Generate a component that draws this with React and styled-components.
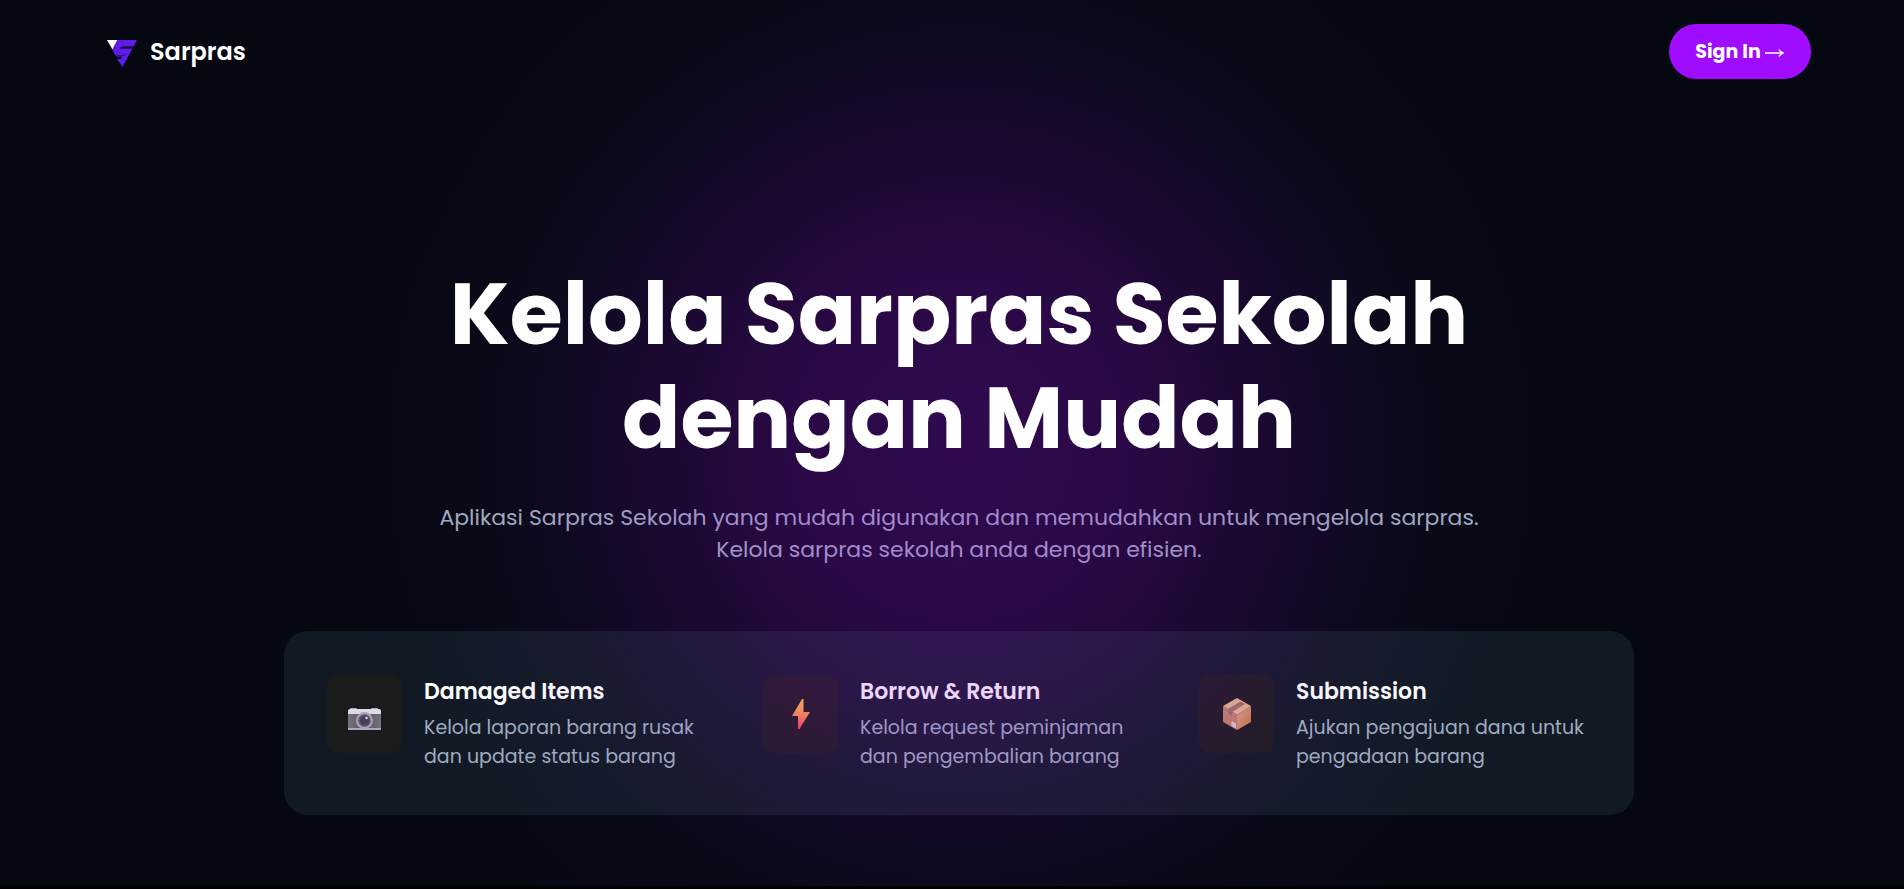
import React from "react";
import styled, { createGlobalStyle } from "styled-components";

const Global = createGlobalStyle`
  *, *::before, *::after { box-sizing: border-box; }
  body {
    margin: 0;
    background: #000;
    color: #fff;
    font-family: Poppins, Inter, "Open Sans", sans-serif;
  }
  h1, h2, p { margin: 0; }
`;

const Page = styled.div`
  position: relative;
  overflow: hidden;
  background: #050711;
  padding: 0 0 71px 14px;
`;

const Glow = styled.div`
  position: absolute;
  inset: 0 0 0 14px;
  pointer-events: none;
  background: radial-gradient(circle 620px at 50% 51%,
    rgba(172, 16, 255, 0.26) 0%,
    rgba(168, 16, 250, 0.225) 28%,
    rgba(150, 20, 230, 0.125) 54%,
    rgba(130, 60, 200, 0.055) 72%,
    rgba(110, 80, 190, 0.02) 88%,
    rgba(110, 80, 190, 0) 100%);
`;

const Nav = styled.header`
  display: flex;
  align-items: center;
  justify-content: space-between;
  padding: 24px 93px;
`;

const Brand = styled.a`
  display: flex;
  align-items: center;
  gap: 12px;
  color: #fff;
  text-decoration: none;
  font-size: 24px;
  line-height: 36px;
  font-weight: 600;
`;

const SignIn = styled.button`
  position: relative;
  z-index: 1;
  display: flex;
  align-items: center;
  justify-content: center;
  gap: 4px;
  width: 142px;
  height: 55px;
  border: 0;
  border-radius: 28px;
  background: #a00cff;
  color: #fff;
  font: inherit;
  font-size: 19px;
  font-weight: 700;
  cursor: pointer;
`;

const Hero = styled.section`
  display: flex;
  flex-direction: column;
  align-items: center;
  padding: 159px 24px 0;
  text-align: center;
`;

const Heading = styled.h1`
  position: relative;
  z-index: 1;
  font-size: 86px;
  line-height: 104px;
  font-weight: 700;
`;

const Lead = styled.p`
  margin-top: 32px;
  color: #a0aec0;
  font-size: 22px;
  line-height: 32px;
`;

const Features = styled.section`
  display: grid;
  grid-template-columns: repeat(3, minmax(0, 1fr));
  column-gap: 44px;
  width: 100%;
  max-width: 1350px;
  margin-top: 65px;
  padding: 44px 43px;
  border-radius: 24px;
  background: #111924;
  text-align: left;
`;

const Feature = styled.article`
  display: flex;
  align-items: flex-start;
  gap: 22px;
`;

const IconTile = styled.div`
  flex: none;
  display: grid;
  place-items: center;
  width: 75px;
  height: 78px;
  border-radius: 11px;
  background: #1c1b1b;
`;

const FeatureTitle = styled.h2`
  font-size: 22px;
  line-height: 34px;
  font-weight: 600;
`;

const FeatureText = styled.p`
  margin-top: 4px;
  color: #a0aec0;
  font-size: 19px;
  line-height: 29px;
  white-space: nowrap;
`;

const Logo = () => (
  <svg width="31" height="31" viewBox="0 -4 31 31" aria-hidden="true">
    <path d="M0 0h10.500L5.500 9.500z" fill="#fff" />
    <path d="M10.500 0H30L26.500 6.500H16.500q-2.500 0-3.500 2h12.500L15.500 27l-5.500-8h3q1.500 0 2-2.500H9L5.500 9.500z" fill="#5f1be8" />
    <path d="M15 7.200h11.500M9.500 15.500h6.500q2.500 0 3-2.500" stroke="#2c1274" strokeWidth=".8" fill="none" />
  </svg>
);

const Arrow = () => (
  <svg width="20" height="10" viewBox="0 0 20 10" fill="none" stroke="#fff" strokeWidth="1.300" aria-hidden="true">
    <path d="M0 6h18.500M14 2.500q1.500 3 4.500 3.500q-3 .5-4.500 3.500" />
  </svg>
);

const Camera = () => (
  <svg width="34" height="40" viewBox="0 0 34 40" aria-hidden="true">
    <defs>
      <linearGradient id="body" x1="0" x2="1">
        <stop offset="0" stopColor="#777080" /><stop offset=".5" stopColor="#59545f" /><stop offset="1" stopColor="#777080" />
      </linearGradient>
    </defs>
    <rect x="2" y="14" width="7" height="4" rx="1" fill="#aaa3b0" />
    <rect x="23" y="14" width="7" height="4" rx="1" fill="#aaa3b0" />
    <rect x="0" y="15" width="33" height="21" rx="2" fill="#ded8e7" />
    <path d="M0 20h33v14H0z" fill="url(#body)" />
    <path d="M0 34h33v1q0 1-1 1H1q-1 0-1-1z" fill="#b6a1cb" />
    <circle cx="16.500" cy="26.500" r="8.500" fill="#aaa4b1" />
    <circle cx="16.500" cy="26.500" r="6.300" fill="#5f5470" />
    <circle cx="16.500" cy="26.500" r="4.500" fill="#483d58" />
    <circle cx="18.500" cy="24" r="1.200" fill="#e8dff0" />
  </svg>
);

const Bolt = () => (
  <svg width="20" height="32" viewBox="0 0 20 32" aria-hidden="true">
    <defs>
      <linearGradient id="bolt" x1="0" y1="0" x2="0" y2="1">
        <stop offset="0" stopColor="#ffc04a" /><stop offset=".5" stopColor="#ff944a" /><stop offset="1" stopColor="#f8444c" />
      </linearGradient>
    </defs>
    <path d="M11 1h1.500v13H19L8.500 31H7V18H1z" fill="url(#bolt)" />
  </svg>
);

const Box = () => (
  <svg width="30" height="34" viewBox="0 0 30 34" aria-hidden="true">
    <defs>
      <linearGradient id="side" x1="0" y1="0" x2="1" y2="1">
        <stop offset="0" stopColor="#e0a684" /><stop offset="1" stopColor="#c2753c" />
      </linearGradient>
      <linearGradient id="front" x1="0" y1="0" x2="0" y2="1">
        <stop offset="0" stopColor="#ba8676" /><stop offset="1" stopColor="#c67c54" />
      </linearGradient>
    </defs>
    <path d="M15 1l14 8-14 9L1 9z" fill="#e2b38c" />
    <path d="M1 9l14 9v15L1 25z" fill="url(#front)" />
    <path d="M29 9l-14 9v15l14-8z" fill="url(#side)" />
    <path d="M18.500 4.500l4.500 2.500-13 8v4l-4-2.500v-4.500z" fill="#9f6f60" />
    <path d="M9.500 24l4.500 2.500v5L9.500 29z" fill="#e0c4dc" />
  </svg>
);

const features = [
  { icon: Camera, title: "Damaged Items", lines: ["Kelola laporan barang rusak", "dan update status barang"] },
  { icon: Bolt, title: "Borrow & Return", lines: ["Kelola request peminjaman", "dan pengembalian barang"] },
  { icon: Box, title: "Submission", lines: ["Ajukan pengajuan dana untuk", "pengadaan barang"] },
];

export default function App() {
  return (
    <>
      <Global />
      <Page>
        <Nav>
          <Brand href="#"><Logo />Sarpras</Brand>
          <SignIn type="button">Sign In <Arrow /></SignIn>
        </Nav>
        <main>
          <Hero>
            <Heading>Kelola Sarpras Sekolah<br />dengan Mudah</Heading>
            <Lead>
              Aplikasi Sarpras Sekolah yang mudah digunakan dan memudahkan untuk mengelola sarpras.<br />
              Kelola sarpras sekolah anda dengan efisien.
            </Lead>
            <Features>
              {features.map(({ icon: Icon, title, lines }) => (
                <Feature key={title}>
                  <IconTile><Icon /></IconTile>
                  <div>
                    <FeatureTitle>{title}</FeatureTitle>
                    <FeatureText>{lines[0]}<br />{lines[1]}</FeatureText>
                  </div>
                </Feature>
              ))}
            </Features>
          </Hero>
        </main>
        <Glow />
      </Page>
    </>
  );
}
